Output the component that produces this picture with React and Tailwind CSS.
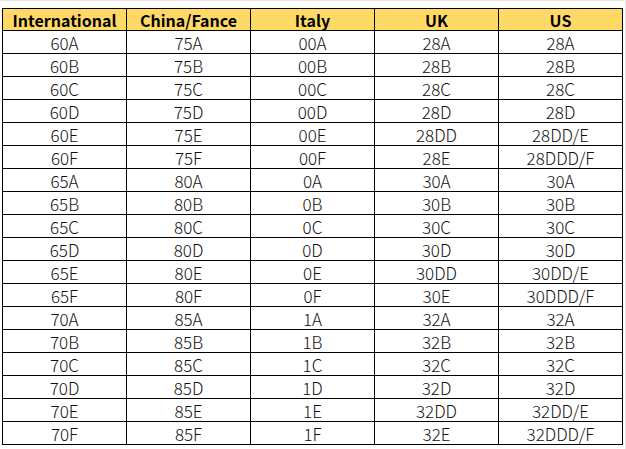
import React from "react";

const rows = [
  ["60A", "75A", "00A", "28A", "28A"],
  ["60B", "75B", "00B", "28B", "28B"],
  ["60C", "75C", "00C", "28C", "28C"],
  ["60D", "75D", "00D", "28D", "28D"],
  ["60E", "75E", "00E", "28DD", "28DD/E"],
  ["60F", "75F", "00F", "28E", "28DDD/F"],
  ["65A", "80A", "0A", "30A", "30A"],
  ["65B", "80B", "0B", "30B", "30B"],
  ["65C", "80C", "0C", "30C", "30C"],
  ["65D", "80D", "0D", "30D", "30D"],
  ["65E", "80E", "0E", "30DD", "30DD/E"],
  ["65F", "80F", "0F", "30E", "30DDD/F"],
  ["70A", "85A", "1A", "32A", "32A"],
  ["70B", "85B", "1B", "32B", "32B"],
  ["70C", "85C", "1C", "32C", "32C"],
  ["70D", "85D", "1D", "32D", "32D"],
  ["70E", "85E", "1E", "32DD", "32DD/E"],
  ["70F", "85F", "1F", "32E", "32DDD/F"],
];

const headers = ["International", "China/Fance", "Italy", "UK", "US"];

const App = () => {
  return (
    <div className="w-[626px] h-[449px] bg-white overflow-hidden font-['Noto_Sans_CJK_SC','Noto_Sans',sans-serif]">
      <div className="w-[626px] h-[449px] border-t border-r border-[#e6e6e6] pt-[7px] pl-[2px]">
        <table className="border-collapse table-fixed w-[621px]">
          <colgroup>
            <col className="w-[124px]" />
            <col className="w-[124px]" />
            <col className="w-[124px]" />
            <col className="w-[124px]" />
            <col className="w-[124px]" />
          </colgroup>
          <thead>
            <tr className="bg-[#FFD966]">
              {headers.map((h) => (
                <th
                  key={h}
                  className="border border-black h-[22px] p-0 text-[16px] leading-[20px] font-bold text-black text-center"
                >
                  {h}
                </th>
              ))}
            </tr>
          </thead>
          <tbody>
            {rows.map((r, i) => (
              <tr key={i}>
                {r.map((c, j) => (
                  <td
                    key={j}
                    className="border border-black h-[23px] p-0 text-[17px] leading-[21px] font-light text-[#111] text-center"
                  >
                    {c}
                  </td>
                ))}
              </tr>
            ))}
          </tbody>
        </table>
      </div>
    </div>
  );
};

export default App;
